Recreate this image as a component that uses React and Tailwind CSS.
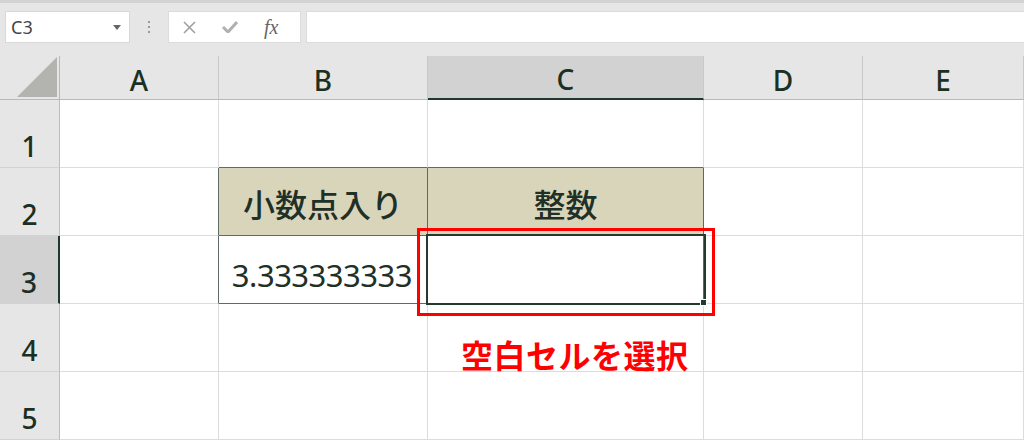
import React from 'react';

const cols = ['A', 'B', 'C', 'D', 'E'];
const rows = [1, 2, 3, 4, 5];

const font = { fontFamily: '"Noto Sans", "Noto Sans CJK JP", sans-serif' };

const Toolbar = () => (
  <div className="h-[56px] border-t-[3px] border-[#d3d3d3] bg-[#e6e6e6] flex items-start pt-[8px] pl-[5px]">
    {/* name box */}
    <div className="w-[125px] h-[32px] bg-white border border-[#d8d8d8] flex items-center justify-between pl-[5px] pr-[8px]">
      <span className="text-[18px] text-[#444] leading-none">C3</span>
      <svg width="8" height="5" viewBox="0 0 8 5">
        <path d="M0 0 L8 0 L4 5 Z" fill="#666" />
      </svg>
    </div>
    <div className="w-[38px] h-[32px] flex flex-col items-center justify-center gap-[3px]">
      <span className="w-[2px] h-[2px] bg-[#9a9a9a]" />
      <span className="w-[2px] h-[2px] bg-[#9a9a9a]" />
      <span className="w-[2px] h-[2px] bg-[#9a9a9a]" />
    </div>
    {/* formula buttons */}
    <div className="w-[133px] h-[32px] bg-white border border-[#dcdcdc] flex items-center pl-[14px] gap-[26px]">
      <svg width="13" height="13" viewBox="0 0 13 13">
        <path d="M1 1 L12 12 M12 1 L1 12" stroke="#a0a0a0" strokeWidth="1.6" />
      </svg>
      <svg width="16" height="12" viewBox="0 0 16 12">
        <path d="M1 6 L6 11 L15 1" stroke="#b0b0b0" strokeWidth="3" fill="none" />
      </svg>
      <span className="text-[20px] italic text-[#666] leading-none" style={{ fontFamily: '"Liberation Serif", serif' }}>fx</span>
    </div>
    <div className="ml-[5px] flex-1 h-[32px] bg-white border-y border-l border-[#dcdcdc]" />
  </div>
);

const dataCell = (r, c) => {
  if (r === 2 && (c === 'B' || c === 'C'))
    return (
      <div key={r + c} className="bg-[#d9d5bb] border-r border-b border-[#5f6a64] flex items-center justify-center pt-[6px] text-[32px] font-medium text-[#1f3026] leading-none">
        {c === 'B' ? '小数点入り' : '整数'}
      </div>
    );
  if (r === 3 && c === 'B')
    return (
      <div key={r + c} className="bg-white border-r border-b border-[#5f6a64] flex items-center justify-end pr-[15px] pt-[12px] text-[31px] tracking-[-0.5px] text-[#1f3026] leading-none">
        3.333333333
      </div>
    );
  let extra = '';
  if (r === 1 && (c === 'B' || c === 'C')) extra = ' !border-b-[#5f6a64]';
  if ((r === 2 || r === 3) && c === 'A') extra = ' !border-r-[#5f6a64]';
  if (r === 3 && c === 'C') extra = ' !border-b-[#5f6a64] !border-r-[#5f6a64]';
  return <div key={r + c} className={`bg-white border-r border-b border-[#dcdcdc]${extra}`} />;
};

export default function App() {
  return (
    <div className="w-[1024px] h-[440px] overflow-hidden relative bg-white" style={font}>
      <Toolbar />
      <div className="grid grid-cols-[60px_159px_209px_276px_159px_161px] grid-rows-[44px_68px_68px_68px_68px_68px]">
        {/* corner */}
        <div className="bg-[#e6e6e6] border-r border-b border-[#b9b9b9] flex items-end justify-end pr-[2px] pb-[2px]">
          <svg width="40" height="40" viewBox="0 0 40 40">
            <path d="M40 0 L40 40 L0 40 Z" fill="#b3b3af" />
          </svg>
        </div>
        {cols.map((c) => (
          <div
            key={c}
            className={`${c === 'C' ? 'bg-[#d2d2d2] border-b-2 border-b-[#1f3a2c]' : 'bg-[#e6e6e6] border-b border-b-[#b9b9b9]'} border-r border-r-[#c8c8c8] flex items-center justify-center pt-[4px] text-[28px] font-medium text-[#1b2f22] leading-none`}
          >
            {c}
          </div>
        ))}
        {rows.map((r) => (
          <React.Fragment key={r}>
            <div
              className={`${r === 3 ? 'bg-[#d2d2d2] border-r-2 border-r-[#1f3a2c]' : 'bg-[#e6e6e6] border-r border-r-[#bdbdbd]'} border-b border-b-[#d2d2d2] flex items-center justify-center pt-[24px] text-[28px] font-medium text-[#1b2f22] leading-none`}
            >
              {r}
            </div>
            {cols.map((c) => dataCell(r, c))}
          </React.Fragment>
        ))}
      </div>

      {/* active cell C3 */}
      <div className="absolute left-[426px] top-[234px] w-[280px] h-[71px] border-2 border-[#233a2e]" />
      <div className="absolute left-[700px] top-[299px] w-[7px] h-[7px] bg-[#233a2e] border border-white" />

      {/* annotation */}
      <div className="absolute left-[417px] top-[228px] w-[298px] h-[88px] border-[3px] border-[#ff0000]" />
      <div className="absolute left-[461px] top-[340px] text-[32px] font-bold text-[#ff0000] leading-none tracking-[0.5px]">
        空白セルを選択
      </div>
    </div>
  );
}
